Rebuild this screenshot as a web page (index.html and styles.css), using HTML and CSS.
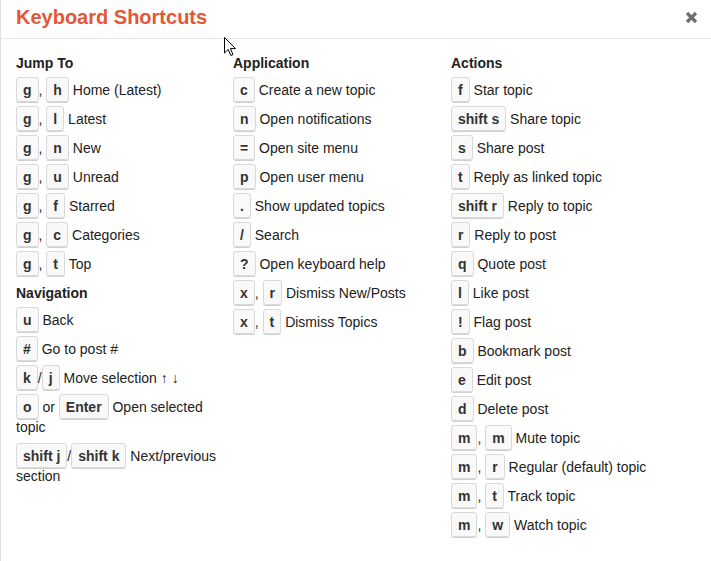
FILE: index.html
```html
<!DOCTYPE html>
<html>
<head>
<meta charset="utf-8">
<link rel="stylesheet" href="styles.css">
</head>
<body>
<div class="modal">
  <div class="modal-header">
    <h3 class="title">Keyboard Shortcuts</h3>
    <button class="close" aria-label="close">
      <svg width="13" height="13" viewBox="0 0 13 13"><path d="M2 2 L11 11 M11 2 L2 11" stroke="#6e6e6e" stroke-width="3.2" stroke-linecap="butt"/></svg>
    </button>
  </div>
  <div class="modal-body">
    <div class="col">
      <h4>Jump To</h4>
      <ul>
        <li><kbd>g</kbd>, <kbd>h</kbd> Home (Latest)</li>
        <li><kbd>g</kbd>, <kbd>l</kbd> Latest</li>
        <li><kbd>g</kbd>, <kbd>n</kbd> New</li>
        <li><kbd>g</kbd>, <kbd>u</kbd> Unread</li>
        <li><kbd>g</kbd>, <kbd>f</kbd> Starred</li>
        <li><kbd>g</kbd>, <kbd>c</kbd> Categories</li>
        <li><kbd>g</kbd>, <kbd>t</kbd> Top</li>
      </ul>
      <h4>Navigation</h4>
      <ul>
        <li><kbd>u</kbd> Back</li>
        <li><kbd>#</kbd> Go to post #</li>
        <li><kbd>k</kbd>/<kbd>j</kbd> Move selection ↑ ↓</li>
        <li><kbd>o</kbd> or <kbd>Enter</kbd> Open selected topic</li>
        <li><kbd>shift j</kbd>/<kbd>shift k</kbd> Next/previous section</li>
      </ul>
    </div>
    <div class="col">
      <h4>Application</h4>
      <ul>
        <li><kbd>c</kbd> Create a new topic</li>
        <li><kbd>n</kbd> Open notifications</li>
        <li><kbd>=</kbd> Open site menu</li>
        <li><kbd>p</kbd> Open user menu</li>
        <li><kbd>.</kbd> Show updated topics</li>
        <li><kbd>/</kbd> Search</li>
        <li><kbd>?</kbd> Open keyboard help</li>
        <li><kbd>x</kbd>, <kbd>r</kbd> Dismiss New/Posts</li>
        <li><kbd>x</kbd>, <kbd>t</kbd> Dismiss Topics</li>
      </ul>
    </div>
    <div class="col">
      <h4>Actions</h4>
      <ul>
        <li><kbd>f</kbd> Star topic</li>
        <li><kbd>shift s</kbd> Share topic</li>
        <li><kbd>s</kbd> Share post</li>
        <li><kbd>t</kbd> Reply as linked topic</li>
        <li><kbd>shift r</kbd> Reply to topic</li>
        <li><kbd>r</kbd> Reply to post</li>
        <li><kbd>q</kbd> Quote post</li>
        <li><kbd>l</kbd> Like post</li>
        <li><kbd>!</kbd> Flag post</li>
        <li><kbd>b</kbd> Bookmark post</li>
        <li><kbd>e</kbd> Edit post</li>
        <li><kbd>d</kbd> Delete post</li>
        <li><kbd>m</kbd>, <kbd>m</kbd> Mute topic</li>
        <li><kbd>m</kbd>, <kbd>r</kbd> Regular (default) topic</li>
        <li><kbd>m</kbd>, <kbd>t</kbd> Track topic</li>
        <li><kbd>m</kbd>, <kbd>w</kbd> Watch topic</li>
      </ul>
    </div>
  </div>
  <svg class="cursor" width="13" height="20" viewBox="0 0 13 20"><path d="M0.5 0.5 L0.5 16 L4.2 12.4 L6.8 18.5 L9 17.6 L6.4 11.6 L11.5 11.6 Z" fill="#fff" stroke="#000" stroke-width="1" stroke-linejoin="miter"/></svg>
</div>
</body>
</html>
```
FILE: styles.css
```css
html, body {
  margin: 0;
  padding: 0;
  background: #fff;
}
body {
  font-family: "Liberation Sans", Arial, sans-serif;
  font-size: 14px;
  color: #222;
}
.modal {
  position: relative;
  min-height: 561px;
  box-sizing: border-box;
  border-left: 1px solid #dedede;
}
.modal-header {
  display: flex;
  justify-content: space-between;
  align-items: flex-start;
  padding: 5px 13px 9px 15px;
  border-bottom: 1px solid #e6e6e6;
}
.title {
  margin: 0;
  font-size: 20px;
  line-height: 24px;
  font-weight: bold;
  color: #e45735;
}
.close {
  border: 0;
  background: none;
  padding: 0;
  margin-top: 6px;
  width: 13px;
  height: 13px;
  display: block;
}
.close svg { display: block; }
.modal-body {
  display: grid;
  grid-template-columns: 217px 218px 1fr;
  padding: 14px 10px 0 15px;
}
h4 {
  margin: 0 0 7px;
  font-size: 14px;
  line-height: 20px;
  font-weight: bold;
  color: #222;
}
ul {
  list-style: none;
  margin: 0 0 2px;
  padding: 0;
}
li {
  line-height: 20px;
  margin-bottom: 9px;
  padding-right: 8px;
}
kbd {
  display: inline;
  font-family: "Liberation Sans", Arial, sans-serif;
  font-size: 14px;
  font-weight: bold;
  color: #333;
  background: #f9f9f9;
  border: 1px solid #d9d9d9;
  border-radius: 3px;
  box-shadow: 0 1px 0 #cfcfcf;
  padding: 4px 6px 3px;
}
.cursor {
  position: absolute;
  left: 223px;
  top: 37px;
}
```
